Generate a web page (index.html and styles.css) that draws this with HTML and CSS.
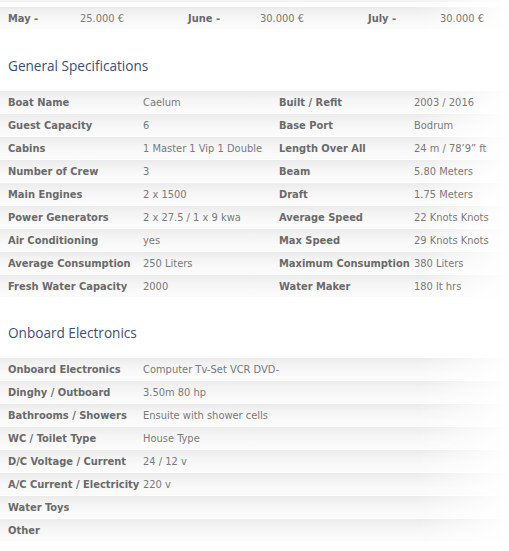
FILE: index.html
```html
<!DOCTYPE html>
<html>
<head>
<meta charset="utf-8">
<link rel="stylesheet" href="styles.css">
</head>
<body>
<div class="page">
  <div class="stub"></div>
  <div class="row prices">
    <div class="lbl">May -</div><div class="val">25.000 €</div>
    <div class="lbl">June -</div><div class="val">30.000 €</div>
    <div class="lbl">July -</div><div class="val">30.000 €</div>
  </div>

  <h2 class="title title-first">General Specifications</h2>
  <div class="specs">
    <div class="row quad"><div class="lbl">Boat Name</div><div class="val">Caelum</div><div class="lbl">Built / Refit</div><div class="val">2003 / 2016</div></div>
    <div class="row quad"><div class="lbl">Guest Capacity</div><div class="val">6</div><div class="lbl">Base Port</div><div class="val">Bodrum</div></div>
    <div class="row quad"><div class="lbl">Cabins</div><div class="val">1 Master 1 Vip 1 Double</div><div class="lbl">Length Over All</div><div class="val">24 m / 78’9” ft</div></div>
    <div class="row quad"><div class="lbl">Number of Crew</div><div class="val">3</div><div class="lbl">Beam</div><div class="val">5.80 Meters</div></div>
    <div class="row quad"><div class="lbl">Main Engines</div><div class="val">2 x 1500</div><div class="lbl">Draft</div><div class="val">1.75 Meters</div></div>
    <div class="row quad"><div class="lbl">Power Generators</div><div class="val">2 x 27.5 / 1 x 9 kwa</div><div class="lbl">Average Speed</div><div class="val">22 Knots Knots</div></div>
    <div class="row quad"><div class="lbl">Air Conditioning</div><div class="val">yes</div><div class="lbl">Max Speed</div><div class="val">29 Knots Knots</div></div>
    <div class="row quad"><div class="lbl">Average Consumption</div><div class="val">250 Liters</div><div class="lbl">Maximum Consumption</div><div class="val">380 Liters</div></div>
    <div class="row quad"><div class="lbl">Fresh Water Capacity</div><div class="val">2000</div><div class="lbl">Water Maker</div><div class="val">180 lt hrs</div></div>
  </div>

  <h2 class="title">Onboard Electronics</h2>
  <div class="specs">
    <div class="row duo"><div class="lbl">Onboard Electronics</div><div class="val">Computer Tv-Set VCR DVD-</div></div>
    <div class="row duo"><div class="lbl">Dinghy / Outboard</div><div class="val">3.50m 80 hp</div></div>
    <div class="row duo"><div class="lbl">Bathrooms / Showers</div><div class="val">Ensuite with shower cells</div></div>
    <div class="row duo"><div class="lbl">WC / Toilet Type</div><div class="val">House Type</div></div>
    <div class="row duo"><div class="lbl">D/C Voltage / Current</div><div class="val">24 / 12 v</div></div>
    <div class="row duo"><div class="lbl">A/C Current / Electricity</div><div class="val">220 v</div></div>
    <div class="row duo"><div class="lbl">Water Toys</div><div class="val"></div></div>
    <div class="row duo"><div class="lbl">Other</div><div class="val"></div></div>
  </div>
</div>
</body>
</html>
```

FILE: styles.css
```css
html, body {
  margin: 0;
  padding: 0;
  background: #fff;
  overflow: hidden;
}
.page {
  width: 509px;
  font-family: "DejaVu Sans Condensed", "DejaVu Sans", sans-serif;
  font-size: 11px;
  color: #777;
}
.stub {
  height: 2px;
  margin-bottom: 5px;
  background: linear-gradient(to right, rgba(255,255,255,0) 85%, #fff 100%), #f4f4f4;
}
.row {
  display: grid;
  height: 22px;
  align-items: center;
  border-bottom: 1px solid #fff;
  background:
    linear-gradient(to right, rgba(255,255,255,0) 82%, #fff 100%),
    linear-gradient(to bottom, #ebebeb 0%, #f4f4f4 35%, #f9f9f9 70%, #fbfbfb 100%);
  white-space: nowrap;
  overflow: hidden;
}
.prices {
  grid-template-columns: 72px 108px 72px 108px 72px 108px;
}
.quad {
  grid-template-columns: 135px 136px 135px 135px;
}
.duo {
  grid-template-columns: 135px 374px;
}
.lbl {
  padding-left: 8px;
  font-weight: bold;
  color: #6a6a6a;
}
.val {
  padding-left: 8px;
  color: #7a7a7a;
}
.title {
  margin: 25px 0 15px 8px;
  height: 20px;
  line-height: 20px;
  font-family: "Open Sans", sans-serif;
  font-weight: normal;
  font-size: 13.6px;
  color: #3d4f75;
}
.title-first {
  margin-top: 26px;
}
```
